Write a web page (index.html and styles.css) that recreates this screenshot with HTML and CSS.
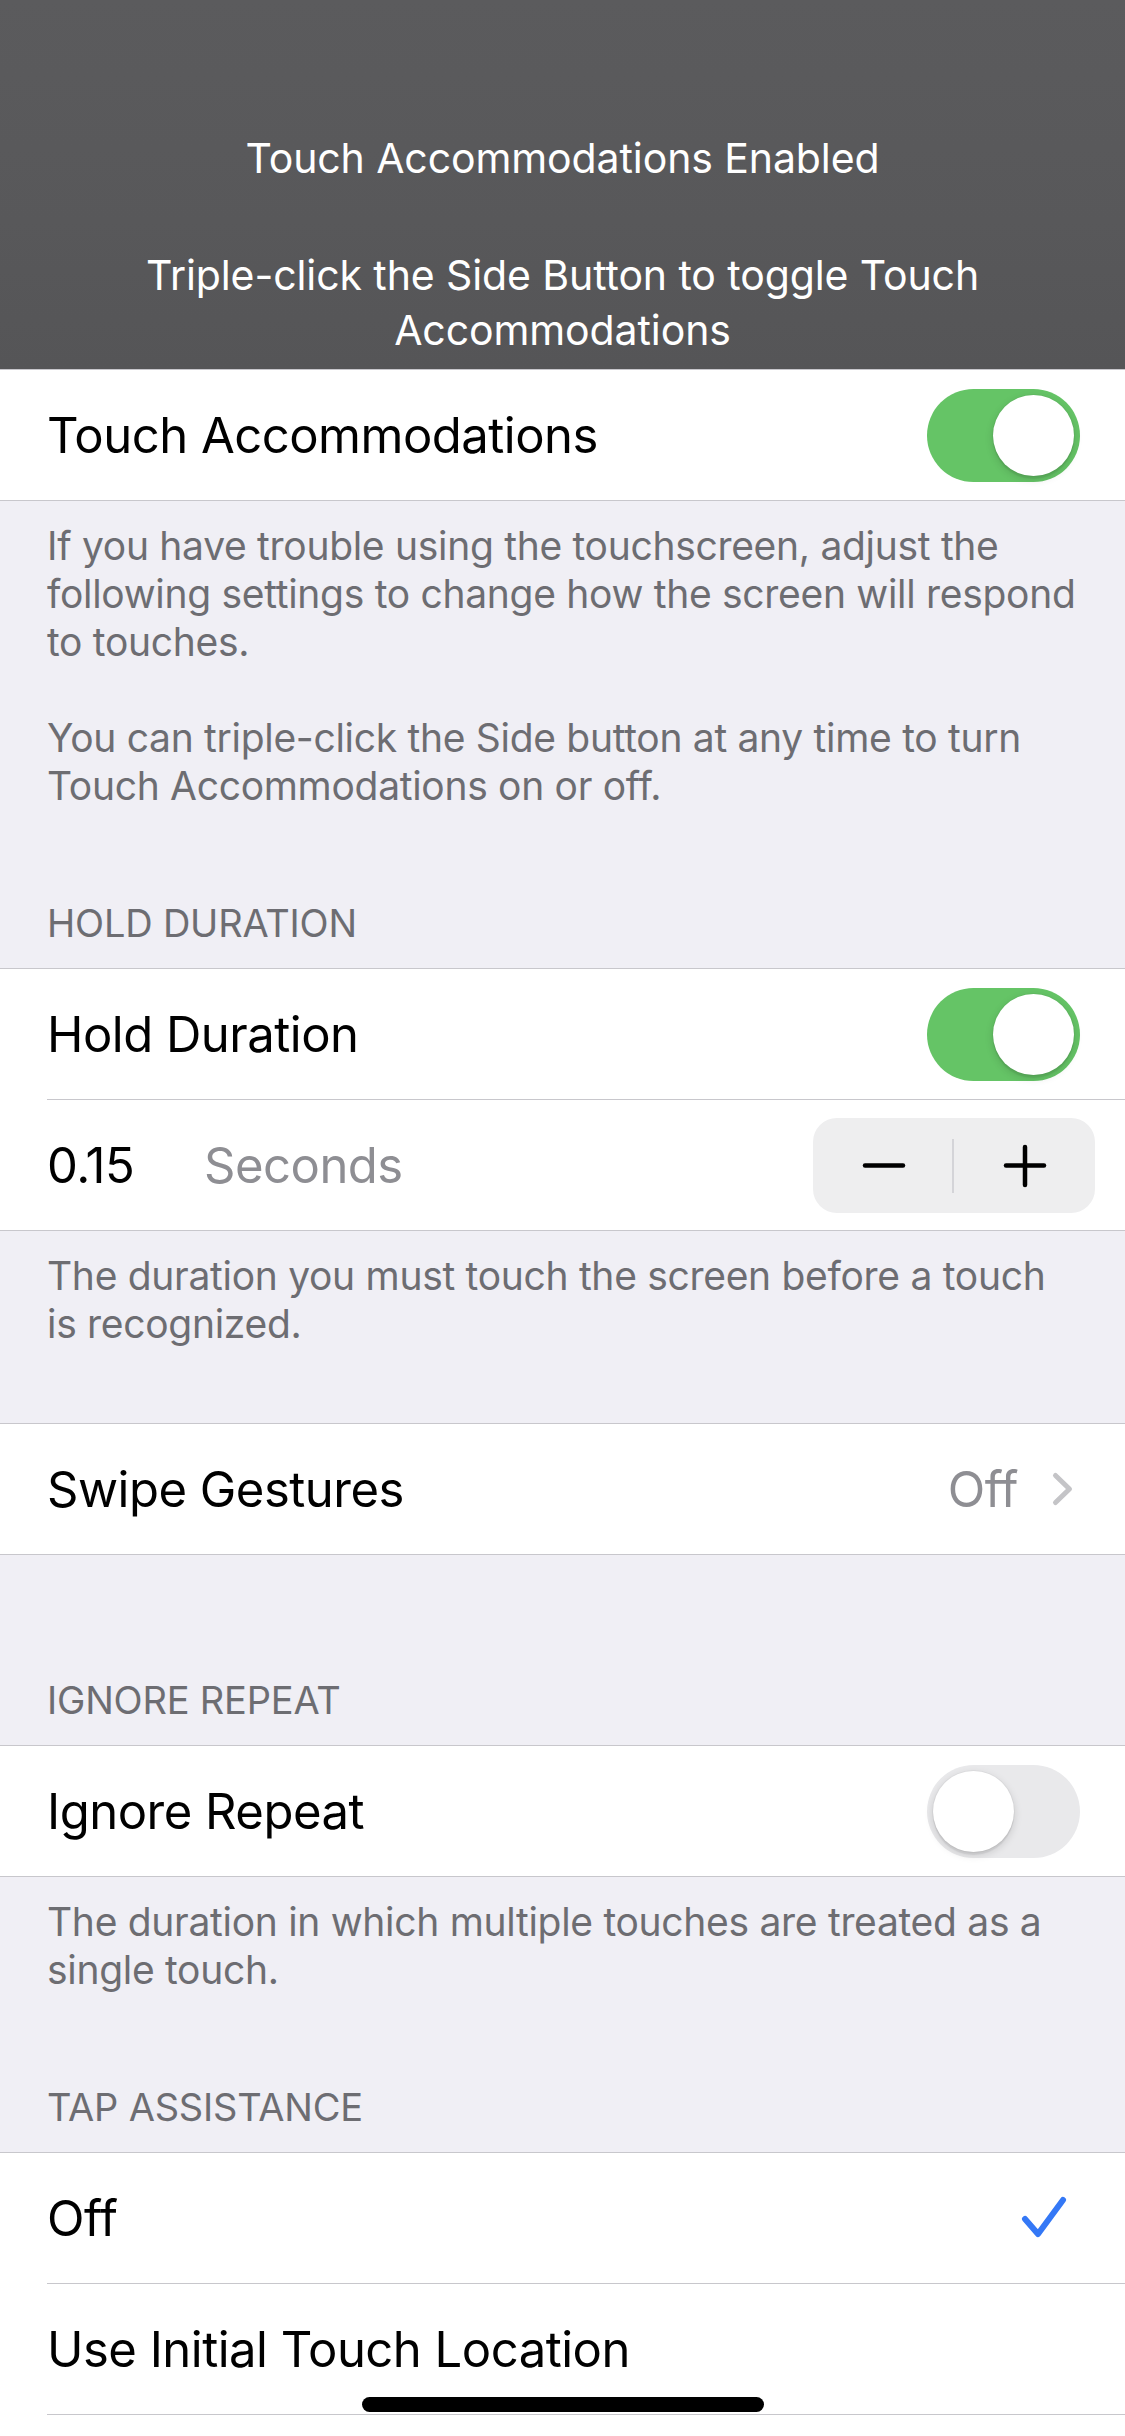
FILE: index.html
```html
<!DOCTYPE html>
<html lang="en">
<head>
<meta charset="utf-8">
<title>Touch Accommodations</title>
<link rel="stylesheet" href="styles.css">
</head>
<body>
<div class="hud">
  <p class="hud-title">Touch Accommodations Enabled</p>
  <p class="hud-text">Triple-click the Side Button to toggle Touch Accommodations</p>
</div>

<div class="group">
  <div class="row"><div class="row-inner">
    <span class="label">Touch Accommodations</span>
    <span class="switch on"><span class="knob"></span></span>
  </div></div>
</div>
<div class="footer">
  <p>If you have trouble using the touchscreen, adjust the following settings to change how the screen will respond to touches.</p>
  <p>You can triple-click the Side button at any time to turn Touch Accommodations on or off.</p>
</div>

<div class="header">Hold Duration</div>
<div class="group">
  <div class="row"><div class="row-inner">
    <span class="label">Hold Duration</span>
    <span class="switch on"><span class="knob"></span></span>
  </div></div>
  <div class="row"><div class="row-inner">
    <span class="value">0.15</span>
    <span class="label unit">Seconds</span>
    <span class="stepper">
      <svg width="282" height="95" viewBox="0 0 282 95">
        <line x1="52" y1="47.5" x2="90" y2="47.5" stroke="#000" stroke-width="4.5" stroke-linecap="round"/>
        <line x1="140" y1="21" x2="140" y2="75" stroke="#d4d4d8" stroke-width="2"/>
        <line x1="193" y1="47.5" x2="231" y2="47.5" stroke="#000" stroke-width="4.5" stroke-linecap="round"/>
        <line x1="212" y1="29" x2="212" y2="67" stroke="#000" stroke-width="4.5" stroke-linecap="round"/>
      </svg>
    </span>
  </div></div>
</div>
<div class="footer">
  <p>The duration you must touch the screen before a touch is recognized.</p>
</div>

<div class="group spaced">
  <div class="row"><div class="row-inner">
    <span class="label">Swipe Gestures</span>
    <span class="detail">Off</span>
    <svg class="chevron" width="30" height="40" viewBox="0 0 30 40">
      <polyline points="5.5,6.5 19.5,20 5.5,33.5" fill="none" stroke="#c4c4c7" stroke-width="5" stroke-linecap="round" stroke-linejoin="round"/>
    </svg>
  </div></div>
</div>

<div class="header after-group">Ignore Repeat</div>
<div class="group">
  <div class="row"><div class="row-inner">
    <span class="label">Ignore Repeat</span>
    <span class="switch"><span class="knob"></span></span>
  </div></div>
</div>
<div class="footer">
  <p>The duration in which multiple touches are treated as a single touch.</p>
</div>

<div class="header">Tap Assistance</div>
<div class="group">
  <div class="row"><div class="row-inner">
    <span class="label">Off</span>
    <svg class="check" width="60" height="60" viewBox="0 0 60 60">
      <polyline points="5,31 18,46 43,12" fill="none" stroke="#3478f6" stroke-width="6" stroke-linecap="round" stroke-linejoin="round"/>
    </svg>
  </div></div>
  <div class="row"><div class="row-inner">
    <span class="label">Use Initial Touch Location</span>
  </div></div>
  <div class="row"><div class="row-inner"></div></div>
</div>

<div class="home-indicator"></div>
</body>
</html>
```

FILE: styles.css
```css
html, body {
  margin: 0;
  padding: 0;
}

body {
  background: #f0eff5;
  font-family: Inter, "Noto Sans", sans-serif;
  color: #000;
  -webkit-font-smoothing: antialiased;
}

.hud {
  height: 369px;
  box-sizing: border-box;
  padding: 131px 100px 0;
  background: linear-gradient(180deg, #5b5b5d 0%, #58585a 60%, #555557 100%);
  color: #fff;
  text-align: center;
  font-size: 41px;
  line-height: 55px;
  letter-spacing: -0.1px;
}

.hud-title {
  margin: 0;
}

.hud-text {
  margin: 62px 0 0;
}

.group {
  background: #fff;
  border-top: 1px solid #c8c7cc;
  border-bottom: 1px solid #c8c7cc;
}

.group.spaced {
  margin-top: 75px;
}

.row {
  padding-left: 47px;
}

.row-inner {
  height: 130px;
  display: flex;
  align-items: center;
  padding-right: 45px;
  border-bottom: 1px solid #c8c7cc;
}

.row:last-child .row-inner {
  border-bottom: none;
}

.label,
.value,
.detail {
  font-size: 49px;
  line-height: 61px;
  letter-spacing: -0.5px;
  white-space: nowrap;
}

.label {
  flex: 1;
}

.value {
  width: 157px;
}

.unit,
.detail {
  color: #8e8e93;
}

.detail {
  margin-right: 32px;
}

.chevron,
.check {
  display: block;
}

.switch {
  width: 153px;
  height: 93px;
  box-sizing: border-box;
  padding: 6px;
  border-radius: 47px;
  background: #e9e9eb;
  display: flex;
}

.switch.on {
  background: #65c466;
  justify-content: flex-end;
}

.knob {
  width: 81px;
  height: 81px;
  border-radius: 50%;
  background: #fff;
  box-shadow: 0 3px 1px rgba(0, 0, 0, 0.06), 0 3px 8px rgba(0, 0, 0, 0.15), 0 0 0 1px rgba(0, 0, 0, 0.03);
}

.stepper {
  width: 282px;
  height: 95px;
  border-radius: 24px;
  background: #eeeeef;
  margin-right: -15px;
  display: block;
}

.stepper svg {
  display: block;
}

.footer {
  padding: 21px 47px 0;
  color: #6d6d72;
  font-size: 39px;
  line-height: 48px;
  letter-spacing: -0.3px;
}

.footer p {
  margin: 0;
}

.footer p + p {
  margin-top: 48px;
}

.header {
  padding: 89px 47px 21px;
  color: #6d6d72;
  font-size: 38px;
  line-height: 48px;
  text-transform: uppercase;
  letter-spacing: -0.2px;
}

.header.after-group {
  padding-top: 121px;
}

.home-indicator {
  position: fixed;
  left: 50%;
  bottom: 24px;
  width: 402px;
  height: 15px;
  margin-left: -201px;
  border-radius: 8px;
  background: #000;
}
```
